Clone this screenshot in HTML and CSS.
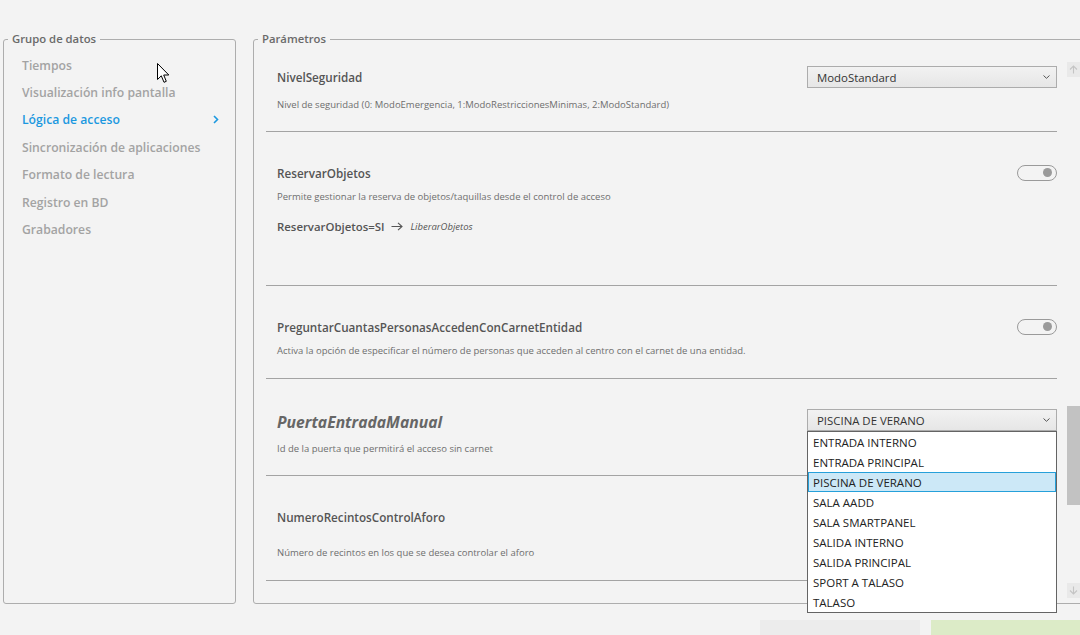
FILE: index.html
```html
<!DOCTYPE html>
<html lang="es">
<head>
<meta charset="utf-8">
<title>Parámetros</title>
<link rel="stylesheet" href="styles.css">
</head>
<body>
<div class="screen">
  <div class="main">
    <fieldset class="box group">
      <legend>Grupo de datos</legend>
      <ul class="menu">
        <li>Tiempos</li>
        <li>Visualización info pantalla</li>
        <li class="active">Lógica de acceso
          <svg class="chev" width="6" height="9" viewBox="0 0 6 9"><path d="M1 1 L4.5 4.5 L1 8" fill="none" stroke="#1b98e0" stroke-width="1.6"/></svg>
        </li>
        <li>Sincronización de aplicaciones</li>
        <li>Formato de lectura</li>
        <li>Registro en BD</li>
        <li>Grabadores</li>
      </ul>
    </fieldset>

    <fieldset class="box params">
      <legend>Parámetros</legend>
      <div class="params-body">
        <div class="rows">
          <div class="row r1">
            <div class="head">
              <span class="title">NivelSeguridad</span>
              <div class="select">ModoStandard
                <svg class="sel-chev" width="7" height="4" viewBox="0 0 7 4"><path d="M0.5 0.5 L3.5 3.3 L6.5 0.5" fill="none" stroke="#555" stroke-width="1"/></svg>
              </div>
            </div>
            <p class="desc">Nivel de seguridad (0: ModoEmergencia, 1:ModoRestriccionesMinimas, 2:ModoStandard)</p>
          </div>

          <div class="row r2">
            <div class="head">
              <span class="title">ReservarObjetos</span>
              <span class="toggle"><span class="knob"></span></span>
            </div>
            <p class="desc">Permite gestionar la reserva de objetos/taquillas desde el control de acceso</p>
            <div class="dep">
              <span class="dep-key">ReservarObjetos=SI</span>
              <svg class="dep-arrow" width="12" height="9" viewBox="0 0 12 9"><path d="M0.5 4.5 H11 M7 0.8 L11 4.5 L7 8.2" fill="none" stroke="#555" stroke-width="1.1"/></svg>
              <span class="dep-val">LiberarObjetos</span>
            </div>
          </div>

          <div class="row r3">
            <div class="head">
              <span class="title">PreguntarCuantasPersonasAccedenConCarnetEntidad</span>
              <span class="toggle"><span class="knob"></span></span>
            </div>
            <p class="desc">Activa la opción de especificar el número de personas que acceden al centro con el carnet de una entidad.</p>
          </div>

          <div class="row r4">
            <div class="head">
              <span class="title big">PuertaEntradaManual</span>
              <div class="select open">PISCINA DE VERANO
                <svg class="sel-chev" width="7" height="4" viewBox="0 0 7 4"><path d="M0.5 0.5 L3.5 3.3 L6.5 0.5" fill="none" stroke="#555" stroke-width="1"/></svg>
                <ul class="dropdown">
                  <li>ENTRADA INTERNO</li>
                  <li>ENTRADA PRINCIPAL</li>
                  <li class="sel">PISCINA DE VERANO</li>
                  <li>SALA AADD</li>
                  <li>SALA SMARTPANEL</li>
                  <li>SALIDA INTERNO</li>
                  <li>SALIDA PRINCIPAL</li>
                  <li>SPORT A TALASO</li>
                  <li>TALASO</li>
                </ul>
              </div>
            </div>
            <p class="desc">Id de la puerta que permitirá el acceso sin carnet</p>
          </div>

          <div class="row r5">
            <div class="head">
              <span class="title">NumeroRecintosControlAforo</span>
            </div>
            <p class="desc">Número de recintos en los que se desea controlar el aforo</p>
          </div>
        </div>

        <div class="scrollbar">
          <div class="sb-btn">
            <svg width="9" height="9" viewBox="0 0 9 9"><path d="M4.5 8.5 V1 M1 4.5 L4.5 1 L8 4.5" fill="none" stroke="#c4c4c4" stroke-width="1.1"/></svg>
          </div>
          <div class="track"><div class="thumb"></div></div>
          <div class="sb-btn">
            <svg width="9" height="9" viewBox="0 0 9 9"><path d="M4.5 0.5 V8 M1 4.5 L4.5 8 L8 4.5" fill="none" stroke="#c4c4c4" stroke-width="1.1"/></svg>
          </div>
        </div>
      </div>
    </fieldset>
  </div>

  <div class="actions">
    <div class="btn grey"></div>
    <div class="btn green"></div>
  </div>

  <svg class="cursor" width="13" height="21" viewBox="0 0 13 21"><path d="M0.5 0.5 V16.5 L4.3 12.8 L7 19.3 L9.3 18.3 L6.7 12 H11.8 Z" fill="#fff" stroke="#000" stroke-width="1" stroke-linejoin="round"/></svg>
</div>
</body>
</html>
```

FILE: styles.css
```css
html, body {
  margin: 0;
  padding: 0;
  background: #f3f3f3;
  overflow: hidden;
}

body {
  font-family: "Open Sans", "Noto Sans", "Liberation Sans", sans-serif;
  color: #555;
}

.screen {
  position: relative;
  width: 1080px;
  height: 635px;
  overflow: hidden;
}

.main {
  display: flex;
  padding-top: 31px;
  gap: 17px;
}

.box {
  box-sizing: border-box;
  height: 573px;
  margin: 0;
  padding: 0;
  border: 1px solid #adadad;
  border-radius: 3px;
  min-width: 0;
}

.box legend {
  margin-left: 4px;
  padding: 0 4px;
  font-size: 11.3px;
  line-height: 16px;
  font-weight: 600;
  color: #6a6a6a;
}

.group {
  margin-left: 3px;
  width: 233px;
  flex: none;
}

.menu {
  list-style: none;
  margin: 0;
  padding: 4.5px 16px 0 18px;
}

.menu li {
  display: flex;
  align-items: center;
  justify-content: space-between;
  height: 27.4px;
  font-size: 12.2px;
  font-weight: 600;
  color: #a3a3a3;
  white-space: nowrap;
}

.menu li.active {
  color: #1b98e0;
}

.params {
  width: 840px;
  flex: none;
}

.params-body {
  display: flex;
  align-items: flex-start;
  gap: 10px;
  padding-left: 12px;
}

.rows {
  width: 791px;
  flex: none;
}

.row {
  display: flex;
  flex-direction: column;
  padding: 32px 0 20px 11px;
  border-bottom: 1px solid #a3a3a3;
}

.row.r1 { padding-top: 21px; padding-bottom: 19px; }
.row.r1 .desc { margin-top: 12px; }
.row.r2 { padding-bottom: 50px; }
.row.r4 { padding-bottom: 19px; }
.row.r4 .desc { margin-top: 9px; }
.row.r5 .desc { margin-top: 20px; }

.head {
  display: flex;
  align-items: center;
  justify-content: space-between;
  height: 18px;
}

.title {
  font-size: 11.7px;
  font-weight: 600;
  color: #555;
  white-space: nowrap;
}

.title.big {
  font-size: 15.7px;
  font-style: italic;
  font-weight: 700;
  color: #666;
}

.r4 .head { height: 22px; }

.r4 .select {
  align-self: flex-start;
  margin-top: -2px;
}

.desc {
  margin: 8px 0 0;
  height: 14px;
  line-height: 14px;
  font-size: 9.5px;
  color: #6e6e6e;
  white-space: nowrap;
}

.dep {
  display: flex;
  align-items: center;
  height: 18px;
  margin-top: 13px;
}

.dep-key {
  font-size: 11.4px;
  font-weight: 600;
  color: #555;
}

.dep-arrow {
  margin: 0 8px 0 6px;
}

.dep-val {
  font-size: 9.5px;
  font-style: italic;
  color: #555;
}

.select {
  position: relative;
  box-sizing: border-box;
  flex: none;
  display: flex;
  align-items: center;
  justify-content: space-between;
  width: 250px;
  height: 22px;
  padding: 0 5px 0 9px;
  border: 1px solid #acacac;
  background: linear-gradient(#f2f2f2, #e6e6e6);
  font-size: 11.4px;
  color: #333;
}

.sel-chev {
  margin-right: 1px;
}

.dropdown {
  position: absolute;
  z-index: 5;
  left: -1px;
  top: 21px;
  box-sizing: border-box;
  width: 250px;
  margin: 0;
  padding: 0;
  list-style: none;
  border: 1px solid #646464;
  background: #fff;
}

.dropdown li {
  box-sizing: border-box;
  height: 20px;
  line-height: 19px;
  padding-left: 4px;
  border: 1px solid transparent;
  font-size: 11.5px;
  color: #222;
  white-space: nowrap;
}

.dropdown li.sel {
  background: #cce8f7;
  border-color: #26a0da;
}

.toggle {
  position: relative;
  box-sizing: border-box;
  flex: none;
  width: 40px;
  height: 16px;
  border: 1.5px solid #9a9a9a;
  border-radius: 8px;
}

.knob {
  position: absolute;
  right: 4px;
  top: 2px;
  width: 9px;
  height: 9px;
  border-radius: 50%;
  background: #9a9a9a;
}

.scrollbar {
  display: flex;
  flex-direction: column;
  width: 13px;
  height: 536px;
  margin-top: 15px;
  flex: none;
}

.sb-btn {
  display: flex;
  align-items: center;
  justify-content: center;
  height: 15px;
  background: #e9e9e9;
  flex: none;
}

.track {
  flex: 1;
}

.thumb {
  margin-top: 329px;
  height: 99px;
  background: #c2c2c2;
}

.actions {
  display: flex;
  justify-content: flex-end;
  gap: 11px;
  margin-top: 16px;
}

.btn {
  height: 30px;
}

.btn.grey {
  width: 160px;
  background: #ececec;
}

.btn.green {
  width: 149px;
  background: #dcebc7;
}

.cursor {
  position: absolute;
  left: 157px;
  top: 63px;
}
```
